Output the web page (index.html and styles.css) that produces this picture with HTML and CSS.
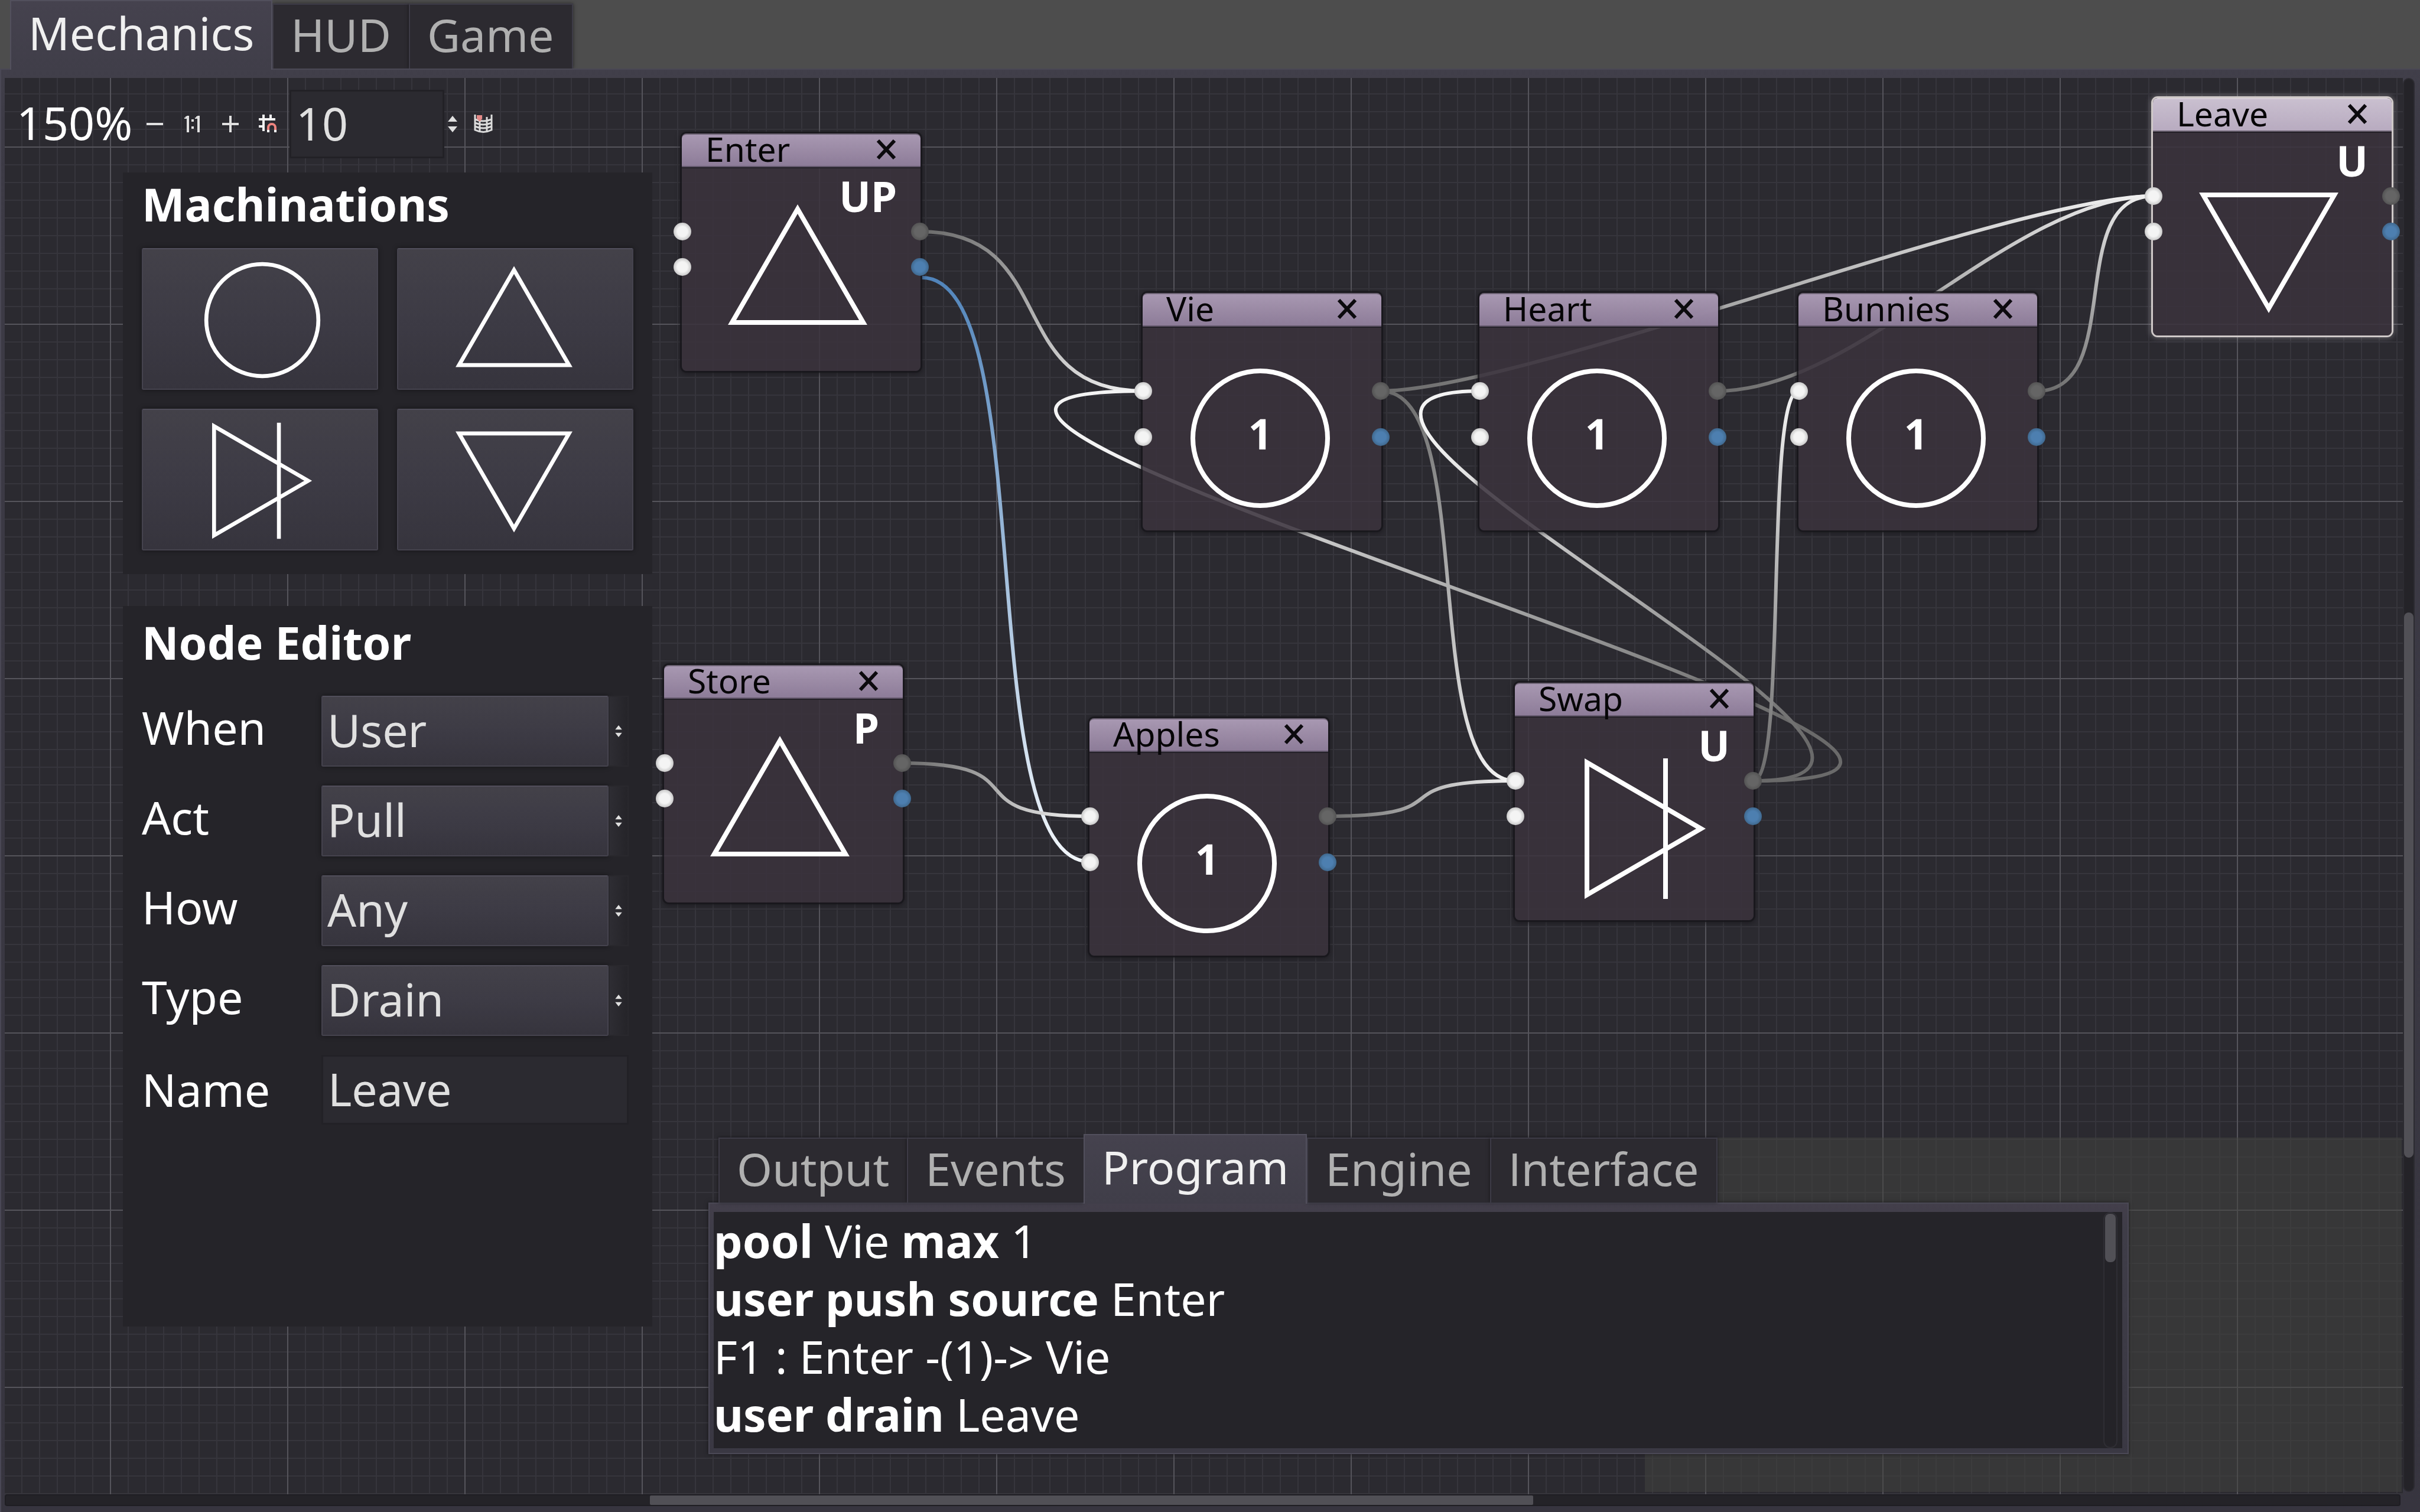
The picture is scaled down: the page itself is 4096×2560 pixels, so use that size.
FILE: index.html
```html
<!DOCTYPE html>
<html lang="en">
<head>
<meta charset="utf-8">
<title>Mechanics</title>
<link rel="stylesheet" href="styles.css">
</head>
<body>
<svg class="defs" aria-hidden="true">
  <symbol id="source" viewBox="0 0 236 204"><path d="M118 8L229 200H7Z"/></symbol>
  <symbol id="drain" viewBox="0 0 236 204"><path d="M118 196L7 4H229Z"/></symbol>
  <symbol id="pool" viewBox="0 0 238 238"><circle cx="119" cy="119" r="114"/></symbol>
  <symbol id="gate" viewBox="0 0 206 238"><path d="M4 7V231L197 119ZM137 0V238"/></symbol>
  <symbol id="close" viewBox="0 0 36 36"><path d="M4 3L32 33M32 3L4 33" stroke="#0c0a0e" stroke-width="6"/></symbol>
  <symbol id="spin" viewBox="0 0 16 28"><path d="M8 0L16 10H0ZM0 18H16L8 28Z" fill="#e0e0e0"/></symbol>
</svg>

<nav class="tabs">
  <button class="tab active">Mechanics</button>
  <button class="tab">HUD</button>
  <button class="tab">Game</button>
</nav>

<main class="frame">
  <section class="canvas">
    <svg class="wires">
      <defs>
        <linearGradient id="w1" gradientUnits="userSpaceOnUse" x1="1557" y1="392" x2="1935" y2="661"><stop stop-color="#6a6a6a"/><stop offset="1" stop-color="#f4f4f4"/></linearGradient>
        <linearGradient id="w2" gradientUnits="userSpaceOnUse" x1="1557" y1="470" x2="1845" y2="1459"><stop stop-color="#4f83ba"/><stop offset="1" stop-color="#f4f8fc"/></linearGradient>
        <linearGradient id="w3" gradientUnits="userSpaceOnUse" x1="1527" y1="1291" x2="1845" y2="1381"><stop stop-color="#6a6a6a"/><stop offset="1" stop-color="#f4f4f4"/></linearGradient>
        <linearGradient id="w4" gradientUnits="userSpaceOnUse" x1="2247" y1="1381" x2="2565" y2="1321"><stop stop-color="#6a6a6a"/><stop offset="1" stop-color="#f4f4f4"/></linearGradient>
        <linearGradient id="w5" gradientUnits="userSpaceOnUse" x1="2337" y1="661" x2="2565" y2="1321"><stop stop-color="#6a6a6a"/><stop offset="1" stop-color="#f4f4f4"/></linearGradient>
        <linearGradient id="w6" gradientUnits="userSpaceOnUse" x1="2337" y1="661" x2="3645" y2="331"><stop stop-color="#6a6a6a"/><stop offset="1" stop-color="#f4f4f4"/></linearGradient>
        <linearGradient id="w7" gradientUnits="userSpaceOnUse" x1="2907" y1="661" x2="3645" y2="331"><stop stop-color="#6a6a6a"/><stop offset="1" stop-color="#f4f4f4"/></linearGradient>
        <linearGradient id="w8" gradientUnits="userSpaceOnUse" x1="3447" y1="661" x2="3645" y2="331"><stop stop-color="#6a6a6a"/><stop offset="1" stop-color="#f4f4f4"/></linearGradient>
        <linearGradient id="w9" gradientUnits="userSpaceOnUse" x1="2967" y1="1321" x2="1935" y2="661"><stop stop-color="#6a6a6a"/><stop offset="1" stop-color="#f4f4f4"/></linearGradient>
        <linearGradient id="w10" gradientUnits="userSpaceOnUse" x1="2967" y1="1321" x2="2505" y2="661"><stop stop-color="#6a6a6a"/><stop offset="1" stop-color="#f4f4f4"/></linearGradient>
        <linearGradient id="w11" gradientUnits="userSpaceOnUse" x1="2967" y1="1321" x2="3045" y2="661"><stop stop-color="#6a6a6a"/><stop offset="1" stop-color="#f4f4f4"/></linearGradient>
      </defs>
      <g transform="translate(-8 -132)" fill="none" stroke-width="6">
        <path stroke="url(#w1)" d="M1557 392C1797 392 1695 662 1935 662"/>
        <path stroke="url(#w2)" d="M1560 470C1764 470 1641 1459 1845 1459"/>
        <path stroke="url(#w3)" d="M1527 1292C1767 1292 1605 1382 1845 1382"/>
        <path stroke="url(#w4)" d="M2247 1382C2487 1382 2325 1322 2565 1322"/>
        <path stroke="url(#w5)" d="M2337 662C2505 662 2397 1322 2565 1322"/>
        <path stroke="url(#w6)" d="M2337 662C2577 662 3405 332 3645 332"/>
        <path stroke="url(#w7)" d="M2907 662C3147 662 3405 332 3645 332"/>
        <path stroke="url(#w8)" d="M3447 662C3600 662 3492 332 3645 332"/>
        <path stroke="url(#w9)" d="M2967 1322C3747 1322 1155 662 1935 662"/>
        <path stroke="url(#w10)" d="M2967 1322C3447 1322 2025 662 2505 662"/>
        <path stroke="url(#w11)" d="M2967 1322C3027 1322 2985 662 3045 662"/>
      </g>
    </svg>

    <article class="node enter">
      <header><h2>Enter</h2><button class="close" aria-label="Close Enter"><svg><use href="#close"/></svg></button></header>
      <div class="node-body"><span class="badge">UP</span><svg class="shape source"><use href="#source"/></svg></div>
      <i class="port in first"></i><i class="port in second"></i><i class="port out first"></i><i class="port out second state"></i>
    </article>
    <article class="node store">
      <header><h2>Store</h2><button class="close" aria-label="Close Store"><svg><use href="#close"/></svg></button></header>
      <div class="node-body"><span class="badge">P</span><svg class="shape source"><use href="#source"/></svg></div>
      <i class="port in first"></i><i class="port in second"></i><i class="port out first"></i><i class="port out second state"></i>
    </article>
    <article class="node is-pool apples">
      <header><h2>Apples</h2><button class="close" aria-label="Close Apples"><svg><use href="#close"/></svg></button></header>
      <div class="node-body"><svg class="shape pool"><use href="#pool"/></svg><span class="count">1</span></div>
      <i class="port in first"></i><i class="port in second"></i><i class="port out first"></i><i class="port out second state"></i>
    </article>
    <article class="node is-pool vie">
      <header><h2>Vie</h2><button class="close" aria-label="Close Vie"><svg><use href="#close"/></svg></button></header>
      <div class="node-body"><svg class="shape pool"><use href="#pool"/></svg><span class="count">1</span></div>
      <i class="port in first"></i><i class="port in second"></i><i class="port out first"></i><i class="port out second state"></i>
    </article>
    <article class="node is-pool heart">
      <header><h2>Heart</h2><button class="close" aria-label="Close Heart"><svg><use href="#close"/></svg></button></header>
      <div class="node-body"><svg class="shape pool"><use href="#pool"/></svg><span class="count">1</span></div>
      <i class="port in first"></i><i class="port in second"></i><i class="port out first"></i><i class="port out second state"></i>
    </article>
    <article class="node is-pool bunnies">
      <header><h2>Bunnies</h2><button class="close" aria-label="Close Bunnies"><svg><use href="#close"/></svg></button></header>
      <div class="node-body"><svg class="shape pool"><use href="#pool"/></svg><span class="count">1</span></div>
      <i class="port in first"></i><i class="port in second"></i><i class="port out first"></i><i class="port out second state"></i>
    </article>
    <article class="node swap">
      <header><h2>Swap</h2><button class="close" aria-label="Close Swap"><svg><use href="#close"/></svg></button></header>
      <div class="node-body"><span class="badge">U</span><svg class="shape gate"><use href="#gate"/></svg></div>
      <i class="port in first"></i><i class="port in second"></i><i class="port out first"></i><i class="port out second state"></i>
    </article>
    <article class="node selected leave">
      <header><h2>Leave</h2><button class="close" aria-label="Close Leave"><svg><use href="#close"/></svg></button></header>
      <div class="node-body"><span class="badge">U</span><svg class="shape drain"><use href="#drain"/></svg></div>
      <i class="port in first"></i><i class="port in second"></i><i class="port out first"></i><i class="port out second state"></i>
    </article>

    <div class="minimap"></div>

    <div class="toolbar">
      <span class="zoom">150%</span>
      <button class="tool" aria-label="Zoom out"><svg viewBox="0 0 32 32"><path d="M2 14h28v4H2z" fill="#e0e0e0"/></svg></button>
      <button class="tool" aria-label="Reset zoom"><svg viewBox="0 0 32 32"><path d="M6 2h4v28H6V7H2V5h2V3h2zM24 2h4v28h-4V7h-4V5h2V3h2zM14 8h4v4h-4zM14 20h4v4h-4z" fill="#e0e0e0"/></svg></button>
      <button class="tool" aria-label="Zoom in"><svg viewBox="0 0 32 32"><path d="M2 14h28v4H2zM14 2h4v28h-4z" fill="#e0e0e0"/></svg></button>
      <button class="tool" aria-label="Snap to grid"><svg viewBox="0 0 32 32"><path d="M6 0h4v6h8V0h4v6h6v4H10v18H6v-6H0v-4h6v-8H0V6h6z" fill="#f4f4f4"/><path d="M16 26v-4a6 6 0 0 1 12 0v4" fill="none" stroke="#ee8480" stroke-width="4"/><path d="M14 26h4v4h-4zM26 26h4v4h-4z" fill="#fff"/></svg></button>
      <input class="entry snap" type="text" value="10" aria-label="Snap distance">
      <svg class="spin"><use href="#spin"/></svg>
      <button class="tool map" aria-label="Toggle minimap"><svg viewBox="0 0 32 32"><path d="M2 0v26q14 7 28 0V0M10 8v21M22 4v25M2 8q14 6 28 0M2 14q14 6 28 0M2 20q14 6 28 0" fill="none" stroke="#dcdcdc" stroke-width="3"/><path d="M5 1h9v6l-3 4H9L5 7z" fill="#e48a88"/></svg></button>
    </div>

    <aside class="side">
      <section class="panel">
        <h1>Machinations</h1>
        <div class="palette">
          <button aria-label="Pool"><svg class="pool"><use href="#pool"/></svg></button>
          <button aria-label="Source"><svg class="source"><use href="#source"/></svg></button>
          <button aria-label="Gate"><svg class="gate"><use href="#gate"/></svg></button>
          <button aria-label="Drain"><svg class="drain"><use href="#drain"/></svg></button>
        </div>
      </section>
      <section class="panel editor">
        <h1>Node Editor</h1>
        <form class="fields">
          <div class="field"><label for="when">When</label><select id="when"><option>User</option></select><span class="handle"><svg><use href="#spin"/></svg></span></div>
          <div class="field"><label for="act">Act</label><select id="act"><option>Pull</option></select><span class="handle"><svg><use href="#spin"/></svg></span></div>
          <div class="field"><label for="how">How</label><select id="how"><option>Any</option></select><span class="handle"><svg><use href="#spin"/></svg></span></div>
          <div class="field"><label for="type">Type</label><select id="type"><option>Drain</option></select><span class="handle"><svg><use href="#spin"/></svg></span></div>
          <div class="field name"><label for="name">Name</label><input class="entry" id="name" type="text" value="Leave"></div>
        </form>
      </section>
    </aside>

    <section class="dock">
      <nav class="tabs">
        <button class="tab">Output</button>
        <button class="tab">Events</button>
        <button class="tab active">Program</button>
        <button class="tab">Engine</button>
        <button class="tab"><span class="serif-i">I</span>nterface</button>
      </nav>
      <div class="dock-frame">
        <div class="dock-body">
          <div class="program">
            <p><b>pool</b> Vie <b>max</b> 1</p>
            <p><b>user push source</b> Enter</p>
            <p>F1 : Enter -(1)-&gt; Vie</p>
            <p><b>user drain</b> Leave</p>
          </div>
          <div class="track inner"><div class="thumb"></div></div>
        </div>
      </div>
    </section>
  </section>
  <div class="track vertical"><div class="thumb"></div></div>
  <div class="track horizontal"><div class="thumb"></div></div>
</main>
</body>
</html>
```
FILE: styles.css
```css
* { box-sizing: border-box; }

body {
  margin: 0;
  min-height: 100vh;
  display: flex;
  flex-direction: column;
  background: #4d4d4d;
  color: #fff;
  font: 77px/112px "Noto Sans", "Open Sans", sans-serif;
}

button, input, select {
  margin: 0;
  padding: 0;
  border: 0;
  border-radius: 0;
  background: none;
  color: inherit;
  font: inherit;
}

h1, h2, p { margin: 0; }
.defs { position: absolute; width: 0; height: 0; }
svg { display: block; }

/* Tabs */
.tabs {
  display: flex;
  align-items: flex-end;
  height: 116px;
  padding-left: 17px;
}
.tab {
  height: 110px;
  padding: 0 30px 6px 29px;
  line-height: 100px;
  color: #b0b0b0;
  background: #2c2a30;
  border: solid #3d3b46;
  border-width: 2px 0 0 2px;
  box-shadow: 0 0 6px rgba(0, 0, 0, .5);
}
.tab:last-child { border-right-width: 2px; }
.tab.active {
  position: relative;
  height: 118px;
  margin-bottom: -2px;
  padding: 0 29px 8px;
  color: #f0f0f0;
  background: linear-gradient(#45424e, #403e49);
  border: solid #52505d;
  border-width: 2px 2px 0;
  box-shadow: none;
}
.serif-i { font-feature-settings: "salt", "ss01", "ss02", "ss03", "cv01"; }

/* Main frame */
.frame {
  flex: 1;
  display: grid;
  grid-template: minmax(0, 1fr) 20px / minmax(0, 1fr) 20px;
  padding: 14px 9px 10px 6px;
  border: solid #4a4855;
  border-width: 2px 0 0 2px;
  background: linear-gradient(#413f4a 0, #3d3b46 100px, #37353f);
}
.canvas {
  position: relative;
  overflow: hidden;
  background-color: #2b2a30;
  background-image:
    linear-gradient(90deg, #55545b 2px, transparent 2px),
    linear-gradient(#55545b 2px, transparent 2px),
    linear-gradient(90deg, #36353c 2px, transparent 2px),
    linear-gradient(#36353c 2px, transparent 2px);
  background-size: 300px 300px, 300px 300px, 30px 30px, 30px 30px;
  background-position: 178px 0, 0 116px, 28px 0, 0 26px;
}
.wires { position: absolute; inset: 0; width: 100%; height: 100%; }

/* Scrollbars */
.track {
  position: relative;
  background: #242328;
  border: 2px solid #2c2b31;
  border-radius: 10px;
}
.thumb { position: absolute; background: #515056; border-radius: 8px; }
.vertical { margin-bottom: 4px; }
.vertical .thumb { left: 0; right: 0; top: 37.8%; height: 38.6%; }
.horizontal { margin-right: 4px; border-color: #1f1e23; border-radius: 4px; }
.horizontal .thumb { top: 0; bottom: 0; left: 26.9%; width: 36.9%; border-radius: 2px; }

/* Graph nodes */
.node {
  position: absolute;
  width: 404px;
  height: 402px;
  border-radius: 8px;
  background: rgba(58, 50, 61, .86);
  box-shadow: 0 0 0 3px rgba(24, 22, 27, .8), 0 2px 8px 3px rgba(20, 18, 23, .6);
}
.enter { left: 1146px; top: 94px; }
.store { left: 1116px; top: 994px; }
.apples { left: 1836px; top: 1084px; }
.vie { left: 1926px; top: 364px; }
.heart { left: 2496px; top: 364px; }
.bunnies { left: 3036px; top: 364px; }
.swap { left: 2556px; top: 1024px; }
.leave { left: 3636px; top: 34px; }

.node header {
  display: flex;
  align-items: center;
  justify-content: space-between;
  height: 57px;
  padding: 0 40px 4px;
  border-top: 2px solid #6d6374;
  border-bottom: 2px solid #63586c;
  border-radius: 8px 8px 0 0;
  background: linear-gradient(rgba(175, 158, 185, .94), rgba(146, 129, 158, .94));
  box-shadow: 0 2px #242128;
}
.node h2 { font-size: 57px; font-weight: 400; line-height: 49px; color: #060507; }
.close svg { width: 36px; height: 36px; }
.node-body {
  position: relative;
  display: grid;
  justify-items: center;
  padding-right: 6px;
}
.shape, .palette svg { fill: none; stroke: #fff; stroke-width: 8px; }
.shape.source { width: 236px; height: 204px; margin: 63px 6px 0 0; }
.shape.drain { width: 236px; height: 204px; margin: 103px 6px 0 0; }
.shape.gate { width: 206px; height: 238px; margin: 71px 0 0 44px; }
.shape.pool { grid-area: 1 / 1; width: 238px; height: 238px; margin-top: 70px; }
.badge, .count { font-size: 71px; font-weight: 700; }
.badge { position: absolute; top: 0; right: 40px; line-height: 98px; }
.count { grid-area: 1 / 1; margin-top: 70px; line-height: 222px; }

.selected {
  box-shadow: 0 0 0 3px #cfc9c8, 0 0 10px 4px rgba(220, 215, 220, .35);
}
.selected header {
  border-color: #d6ced8 #6c6472 #6c6472;
  background: linear-gradient(#c9bfcf, #b8abc0);
}

.port {
  position: absolute;
  width: 30px;
  height: 30px;
  border-radius: 50%;
  background: radial-gradient(#f4f4f4 40%, #c9c9c9 70%);
}
.port.in { left: -14px; }
.port.out { right: -14px; background: radial-gradient(#656565 40%, #545454 70%); }
.port.first { top: 151px; }
.port.second { top: 211px; }
.is-pool .port.second { top: 229px; }
.port.out.state { background: radial-gradient(#4d7fb0 40%, #40698f 70%); }

.minimap {
  position: absolute;
  right: 2px;
  bottom: 4px;
  width: 1281px;
  height: 600px;
  background: rgba(68, 68, 64, .52);
}

/* Toolbar */
.toolbar {
  position: relative;
  display: flex;
  align-items: center;
  padding: 20px 0 0 20px;
}
.zoom { width: 218px; padding-bottom: 4px; }
.tool { width: 32px; height: 32px; margin-right: 32px; }
.entry {
  height: 118px;
  padding: 0 8px 4px;
  color: #e0e0e0;
  background: #2b2a30;
  border: 3px solid #222126;
}
.entry.snap { width: 262px; height: 116px; margin-left: -12px; }
.toolbar .spin { width: 16px; height: 28px; margin: 0 28px 0 6px; }

/* Side panels */
.side {
  position: relative;
  display: grid;
  gap: 54px;
  width: 896px;
  margin: 24px 0 0 200px;
}
.panel {
  padding: 0 32px 40px;
  background: #252429;
}
.panel h1 { font-size: 77px; font-weight: 700; line-height: 108px; }
.palette {
  display: grid;
  grid-template-columns: 1fr 1fr;
  gap: 32px;
  margin-top: 20px;
}
.palette button {
  display: grid;
  place-items: center;
  height: 240px;
}
.palette button, .field select {
  background: linear-gradient(#434149, #3d3b45 50%, #36343d);
  border: 2px solid #45434e;
  border-top-color: #514f5b;
  border-radius: 3px;
  box-shadow: 0 0 8px rgba(0, 0, 0, .45);
}
.palette .pool { width: 198px; height: 198px; margin: 4px 0 0 8px; }
.palette .source { width: 198px; height: 172px; margin: 0 4px 8px 0; }
.palette .gate { width: 170px; height: 198px; margin: 4px 0 0 8px; }
.palette .drain { width: 198px; height: 172px; margin: 8px 4px 0 0; }

.editor { min-height: 1220px; padding-top: 8px; }
.fields { display: grid; gap: 32px; margin-top: 36px; }
.field {
  display: grid;
  grid-template-columns: 304px 1fr 34px;
  align-items: center;
  margin-right: 8px;
}
.field label { padding-bottom: 12px; line-height: 106px; }
.field select {
  appearance: none;
  height: 120px;
  padding: 0 8px 4px;
  color: #e0e0e0;
}
.handle {
  display: grid;
  place-items: center;
  height: 120px;
  background: linear-gradient(90deg, #2e2d33, #252429);
  border: 2px solid #29282d;
}
.handle svg { width: 12px; height: 20px; }
.field.name { grid-template-columns: 304px 1fr; }
.field.name label { padding-bottom: 0; }
.field.name .entry { width: 100%; }

/* Bottom dock */
.dock {
  position: absolute;
  left: 1191px;
  right: 464px;
  bottom: 68px;
}
.dock-frame {
  height: 426px;
  padding: 14px 9px 8px 7px;
  border: 2px solid #4a4855;
  background: linear-gradient(#433f4b, #3f3d48 40px, #3a3843);
  box-shadow: 0 0 6px rgba(0, 0, 0, .5);
}
.dock-body {
  display: flex;
  height: 100%;
  padding-right: 8px;
  background: #252429;
}
.program { flex: 1; line-height: 98px; }
.inner { width: 24px; border-color: #2f2e34; border-radius: 12px; }
.inner .thumb { left: 1px; right: 1px; top: 1px; height: 82px; }
```
